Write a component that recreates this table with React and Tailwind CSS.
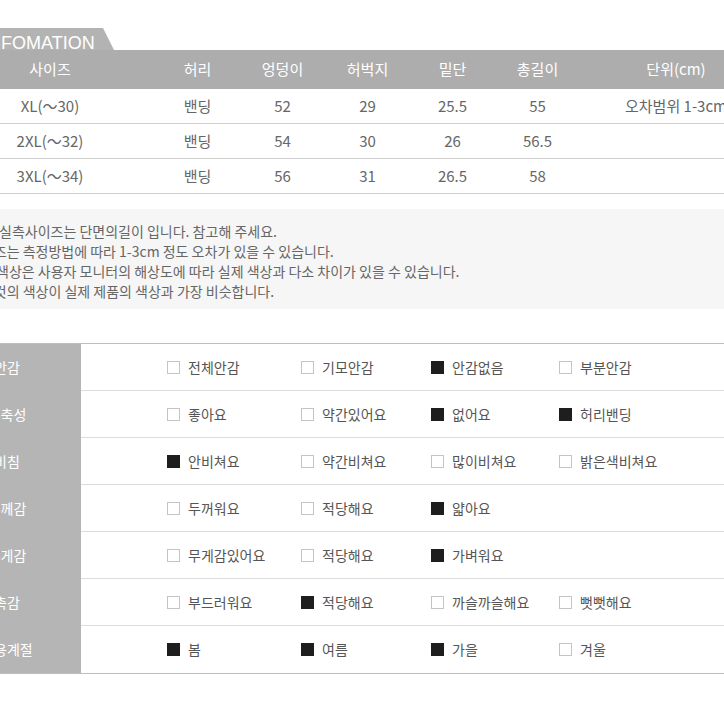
const sizeCols = ['사이즈', '허리', '엉덩이', '허벅지', '밑단', '총길이', '단위(cm)'];

const sizeRows = [
  ['XL(～30)', '밴딩', '52', '29', '25.5', '55', '오차범위 1-3cm'],
  ['2XL(～32)', '밴딩', '54', '30', '26', '56.5', ''],
  ['3XL(～34)', '밴딩', '56', '31', '26.5', '58', ''],
];

const notes = [
  { text: '실측사이즈는 단면의길이 입니다. 참고해 주세요.', cls: 'ml-[-1px]' },
  { text: '사이즈는 측정방법에 따라 1-3cm 정도 오차가 있을 수 있습니다.', cls: 'ml-[-32px]' },
  { text: '색상은 사용자 모니터의 해상도에 따라 실제 색상과 다소 차이가 있을 수 있습니다.', cls: 'ml-[-4px]' },
  { text: '상세컷의 색상이 실제 제품의 색상과 가장 비슷합니다.', cls: 'ml-[-32px]' },
];

const features = [
  { label: '안감', options: [['전체안감', 0], ['기모안감', 0], ['안감없음', 1], ['부분안감', 0]] },
  { label: '신축성', options: [['좋아요', 0], ['약간있어요', 0], ['없어요', 1], ['허리밴딩', 1]] },
  { label: '비침', options: [['안비쳐요', 1], ['약간비쳐요', 0], ['많이비쳐요', 0], ['밝은색비쳐요', 0]] },
  { label: '두께감', options: [['두꺼워요', 0], ['적당해요', 0], ['얇아요', 1]] },
  { label: '무게감', options: [['무게감있어요', 0], ['적당해요', 0], ['가벼워요', 1]] },
  { label: '촉감', options: [['부드러워요', 0], ['적당해요', 1], ['까슬까슬해요', 0], ['뻣뻣해요', 0]] },
  { label: '사용계절', options: [['봄', 1], ['여름', 1], ['가을', 1], ['겨울', 0]] },
];

function Option({ name, checked }) {
  return (
    <div className="flex items-center gap-[8px]">
      <span
        className={`w-[13px] h-[13px] shrink-0 border ${
          checked ? 'bg-[#1e1e1e] border-[#1e1e1e]' : 'bg-white border-[#c4c4c4]'
        }`}
      />
      <span className="text-[14px] text-[#555] whitespace-nowrap">{name}</span>
    </div>
  );
}

function App() {
  return (
    <div
      className="w-[724px] h-[724px] overflow-hidden bg-white"
      style={{ fontFamily: '"Noto Sans CJK KR", "Noto Sans", sans-serif' }}
    >
      {/* size table */}
      <div className="pt-[28px]">
        <div
          className="ml-[-20px] w-[134px] h-[22px] bg-[#b3b3b3] text-white text-[18px] leading-[30px] pl-[3px] overflow-hidden [clip-path:polygon(0_0,123px_0,134px_100%,0_100%)]"
          style={{ fontFamily: '"Liberation Sans", Arial, sans-serif' }}
        >
          INFOMATION
        </div>
        <div className="ml-[-55px] w-[827px]">
          <div className="grid grid-cols-[210px_85px_85px_85px_85px_85px_192px] h-[39px] bg-[#adadad] text-white text-[15px] items-center text-center">
            {sizeCols.map((c) => (
              <div key={c}>{c}</div>
            ))}
          </div>
          {sizeRows.map((r, i) => (
            <div
              key={i}
              className="grid grid-cols-[210px_85px_85px_85px_85px_85px_192px] h-[35px] border-b border-[#cfcfcf] text-[15px] text-[#666] items-center text-center"
            >
              {r.map((c, j) => (
                <div key={j} className="whitespace-nowrap">{c}</div>
              ))}
            </div>
          ))}
        </div>
      </div>

      {/* notes */}
      <div className="mt-[15px] bg-[#f6f6f6] pt-[12px] pb-[8px] text-[14px] leading-[20px] text-[#666]">
        {notes.map((n, i) => (
          <div key={i} className={`whitespace-nowrap ${n.cls}`}>{n.text}</div>
        ))}
      </div>

      {/* features */}
      <div className="mt-[34px] ml-[-67px] w-[791px] border-t border-b border-[#bdbdbd]">
        {features.map((f, i) => (
          <div key={f.label} className="flex h-[47px]">
            <div className="w-[148px] shrink-0 bg-[#b5b5b5] text-white text-[14px] flex items-center justify-center">
              {f.label}
            </div>
            <div
              className={`flex-1 grid grid-cols-[134px_130px_128px_1fr] items-center pl-[86px] ${
                i < features.length - 1 ? 'border-b border-[#dcdcdc]' : ''
              }`}
            >
              {f.options.map(([name, checked]) => (
                <Option key={name} name={name} checked={checked} />
              ))}
            </div>
          </div>
        ))}
      </div>
    </div>
  );
}

export default App;
